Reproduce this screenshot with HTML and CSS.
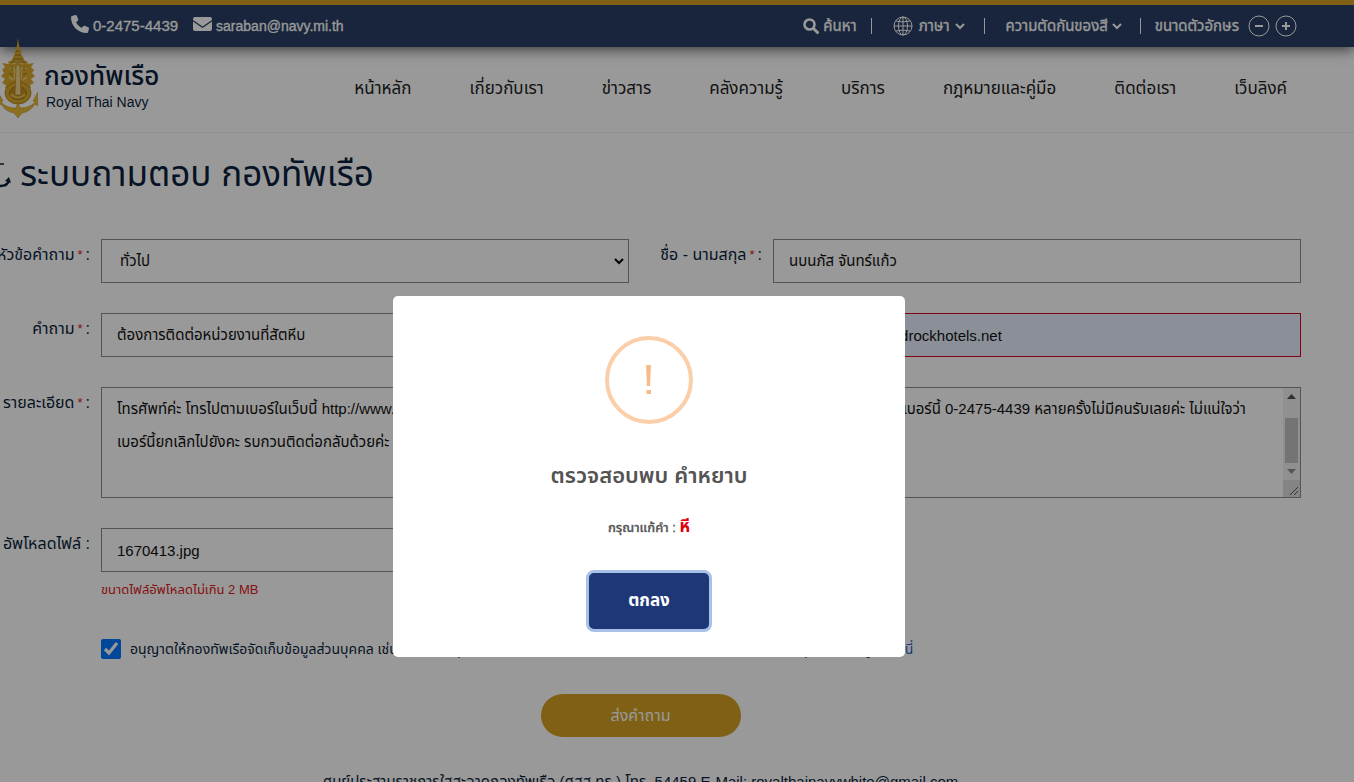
FILE: index.html
```html
<!DOCTYPE html>
<html lang="th">
<head>
<meta charset="utf-8">
<title>ระบบถามตอบ กองทัพเรือ</title>
<link rel="stylesheet" href="styles.css">
</head>
<body>
<div class="topbar">
  <div class="contacts">
    <a class="contact" href="#"><svg width="18" height="18" viewBox="0 0 512 512"><path fill="currentColor" d="M164.900 24.600c-7.700-18.600-28-28.500-47.400-23.200l-88 24C12.100 30.200 0 46 0 64c0 247.400 200.600 448 448 448 18 0 33.800-12.100 38.600-29.500l24-88c5.300-19.400-4.600-39.700-23.200-47.400l-96-40c-16.300-6.800-35.200-2.100-46.300 11.600L304.700 368C234.300 334.700 177.300 277.700 144 207.300L193.300 167c13.700-11.200 18.400-30 11.600-46.300l-40-96z"/></svg><span>0-2475-4439</span></a>
    <a class="contact mail" href="#"><svg width="19" height="14" viewBox="0 0 19 14"><path fill="currentColor" d="M2 0h15a2 2 0 0 1 2 2v1L9.500 9.500 0 3V2a2 2 0 0 1 2-2zM0 4.500l9.500 6.500L19 4.500V12a2 2 0 0 1-2 2H2a2 2 0 0 1-2-2z"/></svg><span>saraban@navy.mi.th</span></a>
  </div>
  <div class="tools">
    <button class="tool"><svg width="16" height="16" viewBox="0 0 16 16" fill="none" stroke="currentColor"><circle cx="6.500" cy="6.500" r="5" stroke-width="2.600"/><path d="M10.300 10.300l4.200 4.200" stroke-width="3" stroke-linecap="round"/></svg><span>ค้นหา</span></button>
    <i class="bar"></i>
    <button class="tool language"><svg width="20" height="20" viewBox="0 0 20 20" fill="none" stroke="currentColor"><circle cx="10" cy="10" r="9"/><ellipse cx="10" cy="10" rx="4.500" ry="9"/><path d="M10 1v18M1 10h18M3 5q7 2 14 0M3 15q7-2 14 0"/></svg><span>ภาษา</span><svg width="10" height="7" viewBox="0 0 10 7"><path d="M1 1l4 4 4-4" fill="none" stroke="currentColor" stroke-width="2"/></svg></button>
    <i class="bar"></i>
    <button class="tool contrast"><span>ความตัดกันของสี</span><svg width="10" height="7" viewBox="0 0 10 7"><path d="M1 1l4 4 4-4" fill="none" stroke="currentColor" stroke-width="2"/></svg></button>
    <i class="bar"></i>
    <div class="tool sizes"><span>ขนาดตัวอักษร</span>
      <button class="round" aria-label="ลดขนาด"><svg width="22" height="22" viewBox="0 0 22 22" fill="none" stroke="currentColor"><circle cx="11" cy="11" r="10"/><path d="M7 11h8" stroke-width="2"/></svg></button>
      <button class="round" aria-label="เพิ่มขนาด"><svg width="22" height="22" viewBox="0 0 22 22" fill="none" stroke="currentColor"><circle cx="11" cy="11" r="10"/><path d="M7 11h8M11 7v8" stroke-width="2"/></svg></button>
    </div>
  </div>
</div>

<header class="header">
  <a class="brand" href="#">
    <svg class="emblem" width="38" height="80" viewBox="0 0 38 80">
      <path fill="#d9a92c" d="M18 0l1 7 1 5 2 2-1 2 2 3 1 3 4 2-1 2 7-1-3 4 3 3-2 3 3 3-4 3 3 4-4 2 1 3-5 1h-16l-5-1 1-3-4-2 3-4-4-3 3-3-2-3 3-3-3-4 7 1-1-2 4-2 1-3 2-3-1-2 2-2 1-5z"/>
      <path fill="none" stroke="#f2d67c" stroke-width="1.500" d="M13 26q5-4 10 0M10 31q3-3 5 1v10M26 31q-3-3-5 1v10M9 39l4 3M27 39l-4 3"/>
      <path fill="none" stroke="#8d661d" stroke-width=".8" d="M16 13h4M15 17h6M13 21h10M11 24h14M9 35l4 2M27 35l-4 2M12 28v4M24 28v4"/>
      <ellipse cx="18" cy="55" rx="10.500" ry="8.500" fill="#c08f23" stroke="#dcab2c" stroke-width="5"/>
      <ellipse cx="18" cy="55" rx="13" ry="11" fill="none" stroke="#9c7020" stroke-width=".7"/>
      <ellipse cx="18" cy="55" rx="8.500" ry="6.500" fill="none" stroke="#8d661d" stroke-width=".8"/>
      <path fill="none" stroke="#e9c04a" stroke-width="2" d="M11 56q7 7 14 0"/>
      <path fill="#efd486" stroke="#a87920" stroke-width=".6" d="M16 28q2-3 4 0l1 29h-6z"/>
      <path fill="#e6bb34" stroke="#b98922" stroke-width=".5" d="M-2 54l5 9-2 1q5 6 15 6l2-6 2 6q10 0 15-6l-2-1 5-9v14l-3-2q-5 8-13 9l-4 5-4-5q-8-1-13-9l-3 2z"/>
    </svg>
    <span class="brand-text"><strong>กองทัพเรือ</strong><small>Royal Thai Navy</small></span>
  </a>
  <nav class="nav">
    <a href="#">หน้าหลัก</a><a href="#">เกี่ยวกับเรา</a><a href="#">ข่าวสาร</a><a href="#">คลังความรู้</a><a href="#">บริการ</a><a href="#">กฎหมายและคู่มือ</a><a href="#">ติดต่อเรา</a><a href="#">เว็บลิงค์</a>
  </nav>
</header>

<main>
  <h1><svg width="12" height="34" viewBox="0 0 12 34" fill="none" stroke="currentColor"><path d="M0 7h4" stroke-width="1.500"/><path d="M0 29q8 0 9-6" stroke-width="2.500"/><path d="M5 24l4-4 2 6z" fill="currentColor" stroke="none"/></svg><span>ระบบถามตอบ กองทัพเรือ</span></h1>
  <form class="form">
    <label for="topic">หัวข้อคำถาม <b>*</b> :</label>
    <div class="select"><select id="topic"><option>ทั่วไป</option></select><svg width="10" height="7" viewBox="0 0 10 7"><path d="M1 1l4 4 4-4" fill="none" stroke="currentColor" stroke-width="2"/></svg></div>
    <label for="name">ชื่อ - นามสกุล <b>*</b> :</label>
    <input id="name" type="text" value="นบนภัส จันทร์แก้ว">

    <label for="question">คำถาม <b>*</b> :</label>
    <input id="question" type="text" value="ต้องการติดต่อหน่วยงานที่สัตหีบ">
    <label for="email">อีเมล <b>*</b> :</label>
    <input id="email" class="invalid" type="email" value="reservation@hardrockhotels.net">

    <label for="detail">รายละเอียด <b>*</b> :</label>
    <div class="detail">
      <textarea id="detail">โทรศัพท์ค่ะ โทรไปตามเบอร์ในเว็บนี้ http://www.navy.mi.th เพื่อติดต่อสอบถามหน่วยงานที่สัตหีบ แต่โทรไม่ติดเลยค่ะ ก็ลองโทรอีกครั้งที่เบอร์นี้ 0-2475-4439 หลายครั้งไม่มีคนรับเลยค่ะ ไม่แน่ใจว่า
เบอร์นี้ยกเลิกไปยังคะ รบกวนติดต่อกลับด้วยค่ะ</textarea>
      <div class="scroll">
        <svg width="9" height="17" viewBox="0 0 9 17"><path fill="#505050" d="M0 11l4.500-5L9 11z"/></svg>
        <span class="thumb"></span>
        <svg width="9" height="17" viewBox="0 0 9 17"><path fill="#909090" d="M0 6l4.500 5L9 6z"/></svg>
        <span class="grip"><svg width="17" height="17" viewBox="0 0 17 17"><path stroke="#555" d="M7 15l8-8M11 15l4-4"/></svg></span>
      </div>
    </div>

    <label for="file">อัพโหลดไฟล์ :</label>
    <div class="upload"><input id="file" type="text" value="1670413.jpg"><p>ขนาดไฟล์อัพโหลดไม่เกิน 2 MB</p></div>

    <div class="consent"><input id="agree" type="checkbox" checked><label for="agree">อนุญาตให้กองทัพเรือจัดเก็บข้อมูลส่วนบุคคล เช่น ชื่อ นามสกุล เบอร์โทรศัพท์ และอีเมล เพื่อใช้ในการติดต่อกลับ อ่านนโยบายคุ้มครองข้อมูลได้ <a href="#">ที่นี่</a></label></div>
  </form>
  <div class="submit-row"><button class="submit">ส่งคำถาม</button></div>
</main>
<footer>ศูนย์ประสานราชการใสสะอาดกองทัพเรือ (ศสส.ทร.) โทร. 54459 E-Mail: royalthainavywhite@gmail.com</footer>

<div class="backdrop">
  <div class="modal" role="dialog" aria-modal="true" aria-labelledby="alert-title">
    <div class="warn"><svg width="8" height="30" viewBox="0 0 8 30"><path fill="currentColor" d="M1 0h5l-1 21H2zM1.500 25h4.500v4H1.500z"/></svg></div>
    <h2 id="alert-title">ตรวจสอบพบ คำหยาบ</h2>
    <p>กรุณาแก้คำ : <b>หี</b></p>
    <button class="ok">ตกลง</button>
  </div>
</div>
</body>
</html>
```
FILE: styles.css
```css
* { box-sizing: border-box; }
html, body { height: 100%; }
body {
  margin: 0;
  overflow: hidden;
  background: #fff;
  color: #0c1f3c;
  font: 15px/24px "Liberation Sans", "Noto Sans Thai", sans-serif;
}
a { color: inherit; text-decoration: none; }
button, input, select, textarea { font: inherit; color: inherit; }
button { background: none; border: 0; padding: 0; }
svg { flex: none; display: block; }

.topbar {
  position: relative;
  display: flex;
  justify-content: space-between;
  height: 47px;
  padding: 0 57px 0 71px;
  align-items: center;
  border-top: 5px solid #d4a122;
  background: #283e64;
  color: #fff;
  font-size: 15px;
  -webkit-text-stroke: 0.3px;
  box-shadow: 0 3px 12px rgba(0, 0, 0, .6);
}
.contacts, .contact, .tools, .tool { display: flex; align-items: center; white-space: nowrap; }
.contacts { gap: 15px; padding-bottom: 4px; }
.contact { gap: 4px; }
.mail { font-size: 14px; }
.contact span { padding-top: 3px; }
.tool { gap: 4px; }
.bar { width: 1px; height: 16px; background: #fff; }
.tools .bar { margin: 0 14px; }
.language { gap: 6px; margin-left: 7px; margin-right: 5px; }
.contrast { margin-left: 6px; margin-right: 4px; }
.sizes .round { margin-left: 1px; }
.sizes span { margin-right: 4px; }

.header {
  display: flex;
  justify-content: space-between;
  height: 86px;
  padding-right: 67px;
  border-bottom: 1px solid #eee;
}
.brand { display: flex; gap: 6px; position: relative; }
.emblem { margin-top: -9px; }
.brand-text { display: flex; flex-direction: column; padding-top: 13px; }
.brand-text strong { font-size: 26px; line-height: 32px; font-weight: 500; white-space: nowrap; }
.brand-text small { font-size: 14px; line-height: 20px; padding-left: 2px; }
.nav { display: flex; gap: 58px; padding-top: 30px; color: #222; font-size: 17px; white-space: nowrap; }

h1 {
  display: flex;
  align-items: center;
  gap: 8px;
  margin: 0;
  padding: 17px 0 41px;
  font-size: 35px;
  line-height: 48px;
  font-weight: 400;
}
.form {
  display: grid;
  grid-template-columns: 90px 1fr 122px 1fr;
  column-gap: 11px;
  row-gap: 30px;
  padding-right: 53px;
}
.form > label { display: flex; justify-content: flex-end; gap: 3px; padding-top: 4px; white-space: nowrap; font-size: 16px; }
.form b { color: #e02020; font-weight: 400; font-size: 13px; }
.form input:not([type="checkbox"]), select {
  display: block;
  width: 100%;
  height: 44px;
  padding: 0 15px;
  border: 1px solid #8c8c8c;
  border-radius: 0;
  background: #fff;
  color: #111;
}
.select { position: relative; }
.select select { appearance: none; padding-left: 18px; }
.select svg { position: absolute; right: 5px; top: 19px; color: #000; }
.form input.invalid { border-color: #d8001f; background: #e8f0fe; }
.detail { grid-column: 2 / -1; display: flex; height: 111px; border: 1px solid #8c8c8c; }
textarea {
  flex: 1;
  min-width: 0;
  padding: 4px 15px;
  border: 0;
  resize: none;
  overflow: hidden;
  line-height: 33px;
  white-space: pre;
  color: #111;
  background: #fff;
}
.scroll { display: flex; flex-direction: column; align-items: center; width: 17px; background: #f1f1f1; }
.thumb { width: 13px; height: 45px; margin-top: 13px; background: #c1c1c1; }
.grip { margin-top: auto; background: #dcdcdc; }
.upload p { margin: 6px 0 0; color: #e02020; font-size: 13px; }
.consent { grid-column: 2 / -1; display: flex; align-items: center; gap: 9px; padding-top: 5px; }
.consent input { width: 20px; height: 20px; margin: 0; accent-color: #0075ff; }
.consent label { font-size: 14px; white-space: nowrap; }
.consent a { color: #2b62c9; }
.submit-row { display: flex; justify-content: center; padding: 33px 73px 0 0; }
.submit { width: 200px; height: 43px; border-radius: 22px; background: #d4a122; color: #fff; font-size: 16px; }
footer { padding: 33px 73px 0 0; text-align: center; white-space: nowrap; }

.backdrop {
  position: fixed;
  inset: 0;
  background: rgba(0, 0, 0, .4);
}
.modal {
  position: absolute;
  left: 393px;
  top: 296px;
  display: flex;
  flex-direction: column;
  align-items: center;
  width: 512px;
  padding: 40px 20px 25px;
  border-radius: 5px;
  background: #fff;
  color: #545454;
}
.warn {
  display: flex;
  align-items: center;
  justify-content: center;
  width: 88px;
  height: 88px;
  border: 4px solid #facea8;
  border-radius: 50%;
  color: #f8bb86;
}
.modal h2 { margin: 32px 0 0; font-size: 22px; line-height: 40px; font-weight: 600; }
.modal p { margin: 19px 0 0; font-size: 13px; line-height: 24px; font-weight: 500; -webkit-text-stroke: 0.3px; }
.modal p b { color: #e00010; font-size: 17px; -webkit-text-stroke: 0; }
.ok {
  width: 126px;
  height: 62px;
  margin-top: 30px;
  border: 3px solid #a9c1e8;
  border-radius: 8px;
  background: #1e3777;
  color: #fff;
  font-size: 17px;
  font-weight: 700;
}
```
